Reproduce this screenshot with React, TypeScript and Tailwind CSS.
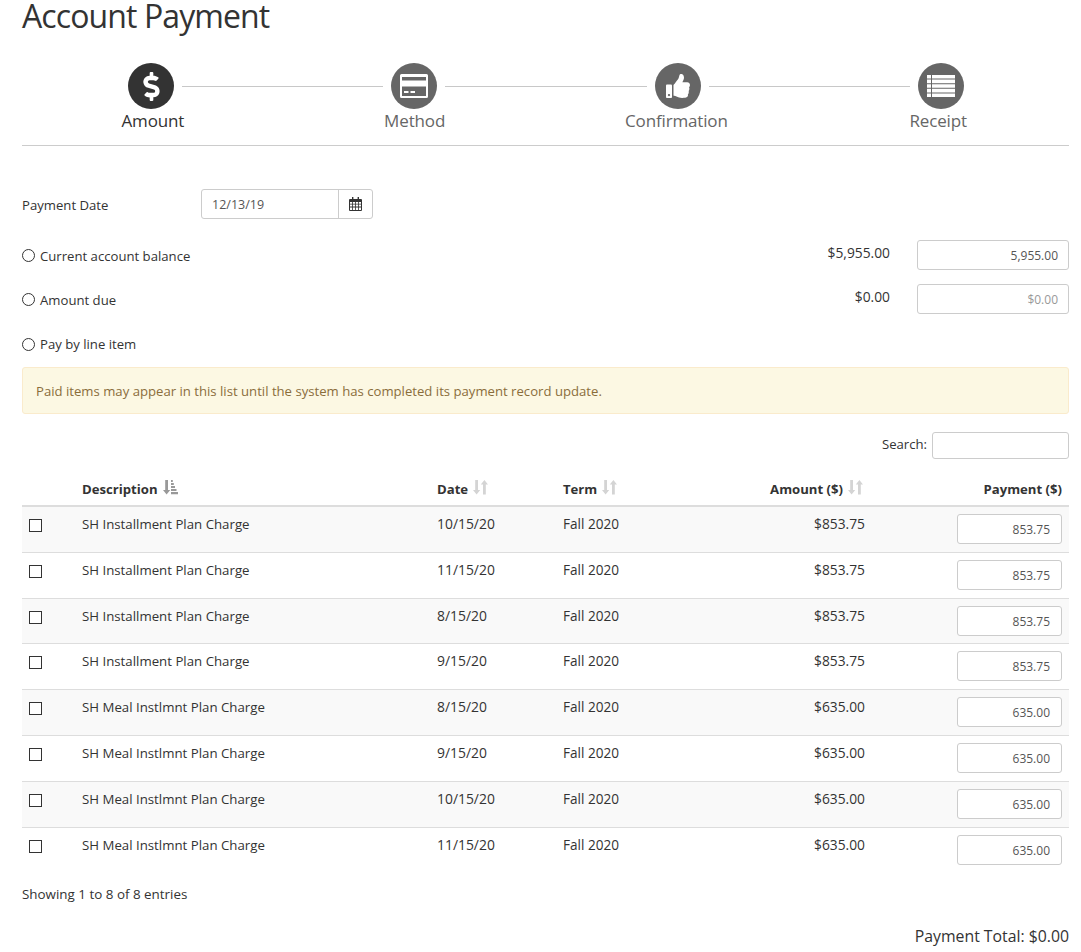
import { FaDollarSign, FaThumbsUp } from "react-icons/fa";

type Charge = { id: number; description: string; date: string; amount: string };

const CHARGES: Charge[] = [
  { id: 1, description: "SH Installment Plan Charge", date: "10/15/20", amount: "853.75" },
  { id: 2, description: "SH Installment Plan Charge", date: "11/15/20", amount: "853.75" },
  { id: 3, description: "SH Installment Plan Charge", date: "8/15/20", amount: "853.75" },
  { id: 4, description: "SH Installment Plan Charge", date: "9/15/20", amount: "853.75" },
  { id: 5, description: "SH Meal Instlmnt Plan Charge", date: "8/15/20", amount: "635.00" },
  { id: 6, description: "SH Meal Instlmnt Plan Charge", date: "9/15/20", amount: "635.00" },
  { id: 7, description: "SH Meal Instlmnt Plan Charge", date: "10/15/20", amount: "635.00" },
  { id: 8, description: "SH Meal Instlmnt Plan Charge", date: "11/15/20", amount: "635.00" },
];

function SortIcon({ active }: { active?: boolean }) {
  const color = active ? "#999999" : "#d4d4d4";
  return (
    <svg width="15" height="16" viewBox="0 0 15 16" className="ml-[5px] -mt-[4px]" fill={color}>
      <path d="M2.2 1h2.8v10h2.2L3.6 15.4 0 11h2.2z" />
      {active ? (
        <path d="M8 13h7v2.2H8zM8 10h5.5v2H8zM8 7h4v2H8zM8 4h2.8v2H8zM8 1h1.8v2H8z" />
      ) : (
        <path d="M10 15.4h2.8v-10H15L11.4 1 7.8 5.4H10z" />
      )}
    </svg>
  );
}

function CalendarIcon() {
  return (
    <svg width="13" height="14" viewBox="0 0 13 14" fill="#333333">
      <path
        fillRule="evenodd"
        d="M3 0h1.4v2H8.6V0H10v2h2a1 1 0 0 1 1 1v10a1 1 0 0 1-1 1H1a1 1 0 0 1-1-1V3a1 1 0 0 1 1-1h2zM1 5v1.8h2.2V5zm3 0v1.8h2.1V5zm2.9 0v1.8H9V5zm2.9 0v1.8H12V5zM1 7.6v2h2.2v-2zm3 0v2h2.1v-2zm2.9 0v2H9v-2zm2.9 0v2H12v-2zM1 10.4V13h2.2v-2.6zm3 0V13h2.1v-2.6zm2.9 0V13H9v-2.6zm2.9 0V13H12v-2.6z"
      />
    </svg>
  );
}

function CardIcon() {
  return (
    <svg width="28" height="24" viewBox="0 0 28 24" fill="#ffffff">
      <path
        fillRule="evenodd"
        d="M1.5 0h25A1.5 1.5 0 0 1 28 1.5v21a1.5 1.5 0 0 1-1.5 1.5h-25A1.5 1.5 0 0 1 0 22.5v-21A1.5 1.5 0 0 1 1.5 0zM2 3v3.5h24V3zm0 9.5V22h24v-9.5z"
      />
      <path d="M4 17h4.5v2H4zM10.5 17H15v2h-4.500z" />
    </svg>
  );
}

function ReceiptIcon() {
  return (
    <svg width="28" height="22" viewBox="0 0 28 22" fill="#ffffff">
      <path d="M0 0h4v3.6H0zM5 0h23v3.6H5zM0 4.600h4v3.600H0zM5 4.600h23v3.600H5zM0 9.200h4v3.600H0zM5 9.200h23v3.600H5zM0 13.800h4v3.600H0zM5 13.800h23v3.600H5zM0 18.400h4V22H0zM5 18.400h23V22H5z" />
    </svg>
  );
}

function Step({ active, children }: { active?: boolean; children: React.ReactNode }) {
  return (
    <div
      className={`flex h-[46px] w-[46px] flex-none items-center justify-center rounded-full text-white ${
        active ? "bg-[#333333]" : "bg-[#666666]"
      }`}
    >
      {children}
    </div>
  );
}

function Connector() {
  return <div className="mx-2 h-px flex-1 bg-[#c8c8c8]" />;
}

function Radio({ label }: { label: string }) {
  return (
    <label className="flex items-center">
      <span className="h-[13px] w-[13px] rounded-full border border-[#333333] bg-white" />
      <span className="ml-[5px]">{label}</span>
    </label>
  );
}

function AmountInput({ value, muted }: { value: string; muted?: boolean }) {
  return (
    <div
      className={`flex h-[30px] w-[152px] items-center justify-end rounded-[3px] border border-[#cccccc] bg-white pr-[10px] pt-[2px] text-[12px] ${
        muted ? "text-[#999999]" : "text-[#555555]"
      }`}
    >
      {value}
    </div>
  );
}

export default function App() {
  return (
    <div
      className="h-[952px] overflow-hidden bg-white pl-[22px] pr-[12px] text-[13.15px] leading-[18px] text-[#333333]"
      style={{ fontFamily: '"Open Sans", "Noto Sans", sans-serif' }}
    >
      <h1 className="h-[63px] text-[32px] font-normal leading-[32px] tracking-[-0.9px]">Account Payment</h1>

      <div className="ml-[106px] flex w-[836px] items-center">
        <Step active>
          <FaDollarSign size={29} />
        </Step>
        <Connector />
        <Step>
          <CardIcon />
        </Step>
        <Connector />
        <Step>
          <FaThumbsUp size={24} />
        </Step>
        <Connector />
        <Step>
          <ReceiptIcon />
        </Step>
      </div>
      <div className="grid h-[37px] grid-cols-4 border-b border-[#cccccc] pt-[1px] text-center text-[17px] leading-[22px] tracking-[-0.15px] text-[#666666]">
        <span className="text-[#333333]">Amount</span>
        <span>Method</span>
        <span>Confirmation</span>
        <span>Receipt</span>
      </div>

      <div className="mt-[43px] flex h-[30px] items-center">
        <span className="mt-[2px] w-[179px]">Payment Date</span>
        <div className="flex h-[30px] w-[172px] rounded-[3px] border border-[#cccccc] text-[12.5px] text-[#555555]">
          <span className="flex w-[136px] items-center pl-[10px] pt-[2px]">12/13/19</span>
          <span className="flex flex-1 items-center justify-center border-l border-[#cccccc]">
            <CalendarIcon />
          </span>
        </div>
      </div>

      <div className="mt-[21px] flex h-[30px] items-center justify-between">
        <div className="mt-[1px]">
          <Radio label="Current account balance" />
        </div>
        <div className="flex items-center">
          <span className="-mt-[5px] mr-[27px] text-[13.8px]">$5,955.00</span>
          <AmountInput value="5,955.00" />
        </div>
      </div>
      <div className="mt-[14px] flex h-[30px] items-center justify-between">
        <div className="mt-[1px]">
          <Radio label="Amount due" />
        </div>
        <div className="flex items-center">
          <span className="-mt-[5px] mr-[27px] text-[13.8px]">$0.00</span>
          <AmountInput value="$0.00" muted />
        </div>
      </div>
      <div className="mt-[21px] flex h-[18px] items-center">
        <Radio label="Pay by line item" />
      </div>

      <div className="mt-[14px] flex h-[47px] items-center rounded-[3px] border border-[#faebcc] bg-[#fcf8e3] pl-[13px] text-[#8a6d3b]">
        Paid items may appear in this list until the system has completed its payment record update.
      </div>

      <div className="mt-[18px] flex h-[27px] items-center justify-end">
        <span className="-mt-[3px] mr-[5px]">Search:</span>
        <div className="h-[27px] w-[137px] rounded-[3px] border border-[#cccccc] bg-white" />
      </div>

      <div className="mt-[17px] grid h-[31px] grid-cols-[60px_355px_126px_150px_152px_204px] items-center border-b-2 border-[#dddddd] pb-[4px] font-bold">
        <span />
        <span className="flex items-center">
          Description
          <SortIcon active />
        </span>
        <span className="flex items-center">
          Date
          <SortIcon />
        </span>
        <span className="flex items-center">
          Term
          <SortIcon />
        </span>
        <span className="flex items-center justify-end pr-[2px]">
          Amount ($)
          <SortIcon />
        </span>
        <span className="pr-[7px] text-right">Payment ($)</span>
      </div>

      {CHARGES.map((c, i) => (
        <div
          key={c.id}
          className={`grid h-[45.8px] grid-cols-[60px_355px_126px_150px_152px_204px] ${
            i < CHARGES.length - 1 ? "border-b border-[#dddddd]" : ""
          } ${i % 2 === 0 ? "bg-[#f9f9f9]" : "bg-white"}`}
        >
          <span className="pl-[7px] pt-[12px]">
            <span className="block h-[13px] w-[13px] border border-[#333333] bg-white" />
          </span>
          <span className="pt-[8px] text-[13.25px]">{c.description}</span>
          <span className="pt-[8px] text-[13.9px]">{c.date}</span>
          <span className="pt-[8px] text-[13.6px]">Fall 2020</span>
          <span className="pt-[8px] text-right text-[13.8px]">${c.amount}</span>
          <span className="flex justify-end pr-[7px] pt-[7px]">
            <span className="flex h-[30px] w-[105px] items-center justify-end rounded-[3px] border border-[#cccccc] bg-white pr-[11px] pt-[2px] text-[12px] text-[#555555]">
              {c.amount}
            </span>
          </span>
        </div>
      ))}

      <div className="mt-[12px] text-[13.4px]">Showing 1 to 8 of 8 entries</div>
      <div className="mt-[22px] text-right text-[15.8px] leading-[22px]">Payment Total: $0.00</div>
    </div>
  );
}
